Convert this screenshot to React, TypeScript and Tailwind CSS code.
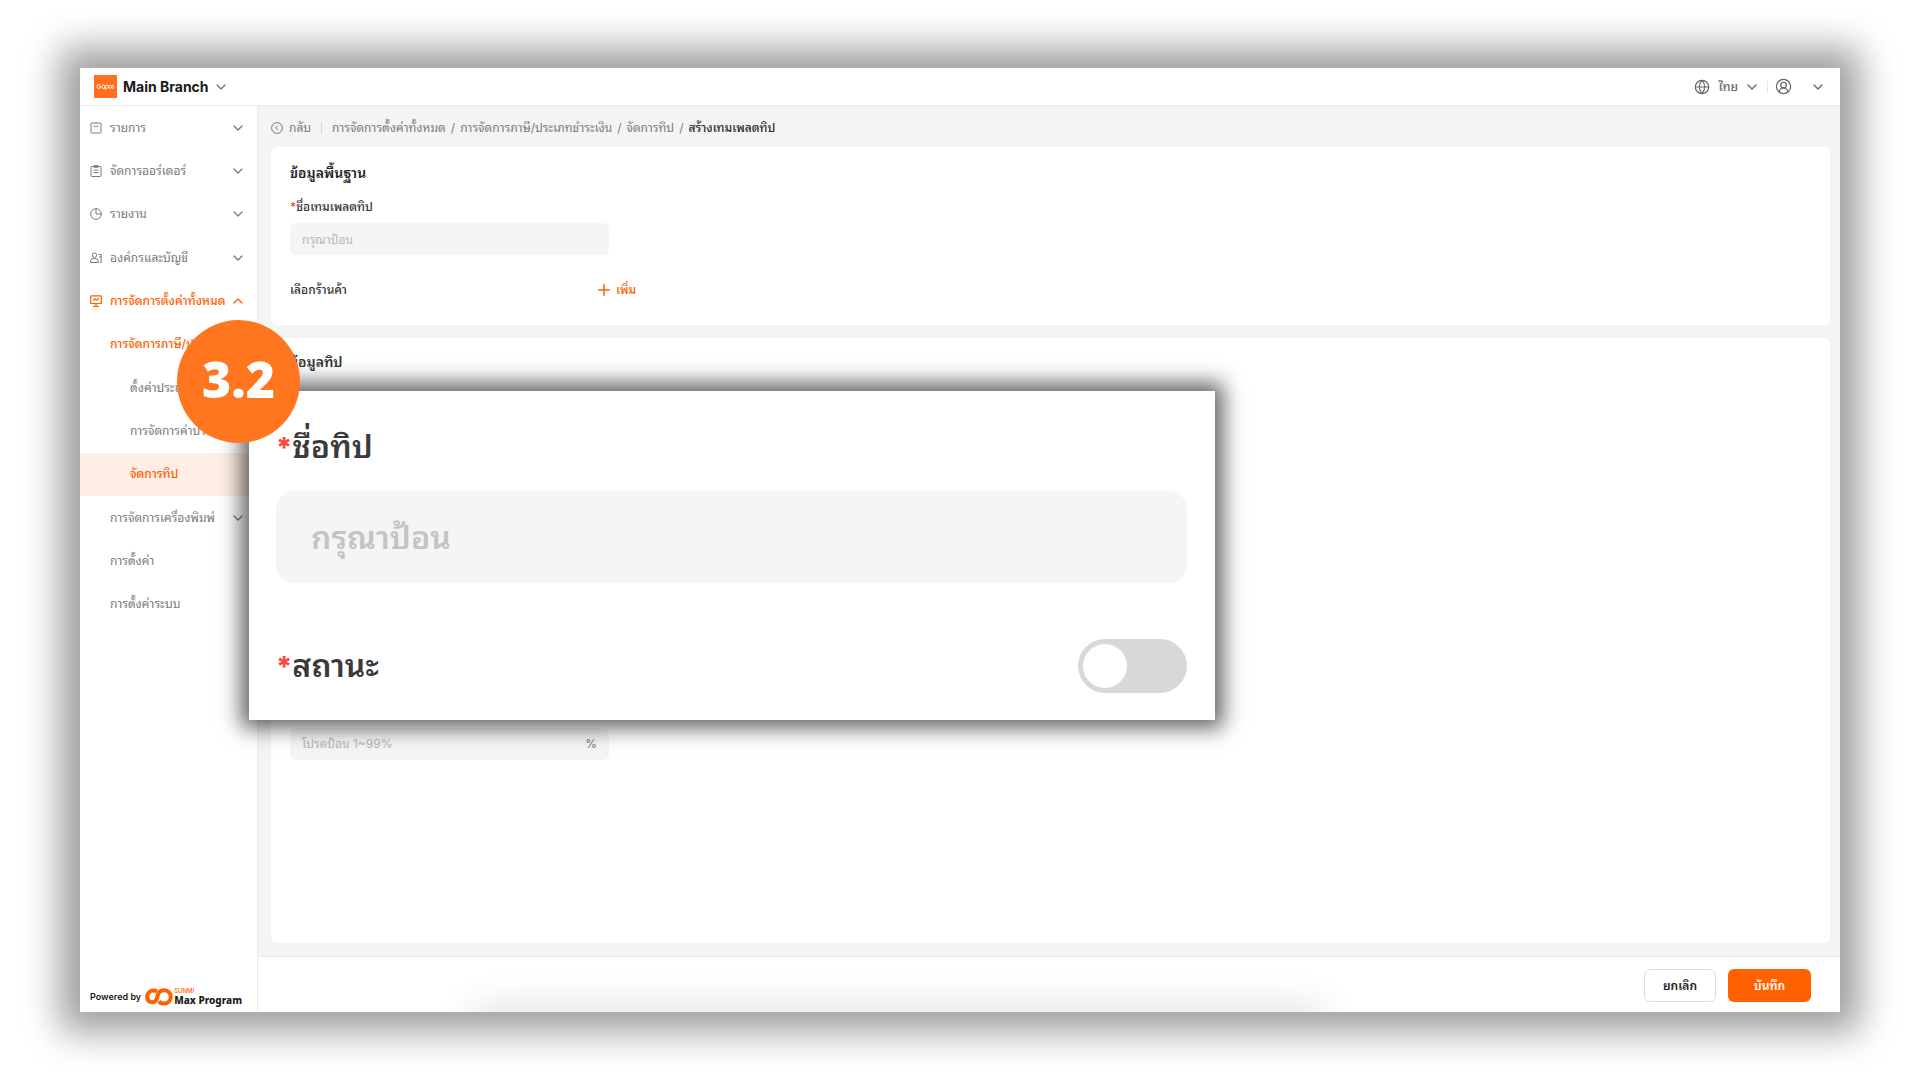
import React from 'react';
import { ChevronDown, ChevronUp, CircleUserRound, Globe, Plus } from 'lucide-react';

interface MenuItem {
  label: string;
  icon?: React.ReactNode;
  level?: 1 | 2;
  active?: boolean;
  selected?: boolean;
  arrow?: 'up' | 'down';
}

const iconProps = {
  width: 12,
  height: 12,
  viewBox: '0 0 12 12',
  fill: 'none',
  stroke: 'currentColor',
  strokeWidth: 1,
  'aria-hidden': true,
};

const BagIcon = () => (
  <svg {...iconProps}>
    <rect x="1" y="1" width="10" height="10" rx=".6" />
    <path d="M3.800 3.200c.4 2.200 4 2.200 4.400 0" />
  </svg>
);

const ClipboardIcon = () => (
  <svg {...iconProps}>
    <rect x="1" y="1.500" width="10" height="10" rx="1" />
    <path d="M4 .7h4v1.600H4zM3.500 5h5M3.500 7.500h5" />
  </svg>
);

const PieIcon = () => (
  <svg {...iconProps}>
    <circle cx="6" cy="6" r="5.300" />
    <path d="M6 .7V6h5.300" />
  </svg>
);

const OrgIcon = () => (
  <svg {...iconProps}>
    <circle cx="4.500" cy="3.200" r="2.200" />
    <path d="M.6 10.500V9c0-1.500 1-2.300 2.400-2.300h3c1.400 0 2.200.8 2.200 2.300v1.500zM8.500 2.500h2.700v8H9.500M9 5h2" />
  </svg>
);

const MonitorIcon = () => (
  <svg {...iconProps} strokeWidth={1.2}>
    <rect x=".7" y=".8" width="10.600" height="7.700" rx=".6" />
    <path d="M3 5.500l1.800-1.700 1.700 1.500L9 3M6 8.500V11M3 11.300h6" />
  </svg>
);

const MENU: MenuItem[] = [
  { label: 'รายการ', icon: <BagIcon />, arrow: 'down' },
  { label: 'จัดการออร์เดอร์', icon: <ClipboardIcon />, arrow: 'down' },
  { label: 'รายงาน', icon: <PieIcon />, arrow: 'down' },
  { label: 'องค์กรและบัญชี', icon: <OrgIcon />, arrow: 'down' },
  { label: 'การจัดการตั้งค่าทั้งหมด', icon: <MonitorIcon />, active: true, arrow: 'up' },
  { label: 'การจัดการภาษี/ประเภท', level: 1, active: true },
  { label: 'ตั้งค่าประเภท', level: 2 },
  { label: 'การจัดการค่าบริการ', level: 2 },
  { label: 'จัดการทิป', level: 2, active: true, selected: true },
  { label: 'การจัดการเครื่องพิมพ์', level: 1, arrow: 'down' },
  { label: 'การตั้งค่า', level: 1 },
  { label: 'การตั้งค่าระบบ', level: 1 },
];

const CRUMBS = ['การจัดการตั้งค่าทั้งหมด', 'การจัดการภาษี/ประเภทชำระเงิน', 'จัดการทิป'];

const SideItem: React.FC<{ item: MenuItem }> = ({ item }) => (
  <li className="flex">
    <button
      className={`flex flex-1 items-center pr-[11px] text-left whitespace-nowrap ${
        item.level === 2 ? 'pl-[50px]' : item.level === 1 ? 'pl-[30px]' : 'pl-[10px]'
      } ${item.active ? 'font-medium text-[#ff6000]' : 'text-[#7a7a7a]'} ${
        item.selected ? 'bg-[#ffeee5]' : ''
      }`}
    >
      {item.icon && <span className="mr-2 shrink-0">{item.icon}</span>}
      <span className="flex-1">{item.label}</span>
      {item.arrow === 'down' && <ChevronDown size={16} className="shrink-0" />}
      {item.arrow === 'up' && <ChevronUp size={16} className="shrink-0" />}
    </button>
  </li>
);

const Header: React.FC = () => (
  <header className="flex h-[38px] shrink-0 items-center border-b border-[#ececec] pr-[14px] pl-[14px] text-[#666]">
    <svg width="23" height="23" viewBox="0 0 23 23" aria-hidden="true">
      <rect width="23" height="23" fill="#ff6f1c" />
      <g fill="none" stroke="#fff" strokeWidth=".9">
        <path d="M6 9.800a2 2 0 1 0 .3 3.200v-1.500H5" />
        <circle cx="9.300" cy="11.800" r="1.700" />
        <circle cx="12.700" cy="11.800" r="1.700" />
        <path d="M11 11.800v3" />
        <circle cx="16" cy="11.800" r="1.500" />
        <path d="M20 10.300c-2-.6-2.400 1-1 1.400s1 2-1 1.500" />
      </g>
    </svg>
    <button className="ml-[6px] flex items-center gap-1 text-[14px] font-bold text-[#1a1a1a]">
      Main Branch
      <ChevronDown size={16} className="text-[#777]" />
    </button>
    <div className="ml-auto flex items-center">
      <button className="flex items-center">
        <Globe size={16} strokeWidth={1.75} />
        <span className="ml-2 font-medium">ไทย</span>
        <ChevronDown size={16} className="ml-[6px]" />
      </button>
      <span className="mx-[7px] h-3 w-px bg-[#e5e5e5]" />
      <button className="flex items-center" aria-label="Account">
        <CircleUserRound size={17} strokeWidth={1.75} />
        <ChevronDown size={16} className="ml-[18px]" />
      </button>
    </div>
  </header>
);

const Breadcrumb: React.FC = () => (
  <nav className="flex h-[41px] shrink-0 items-center pt-[3px] pl-[13px] text-[#7a7a7a]">
    <button className="flex items-center gap-[6px]">
      <svg {...iconProps}>
        <circle cx="6" cy="6" r="5.400" />
        <path d="M7 3.800L4.800 6 7 8.200" />
      </svg>
      กลับ
    </button>
    <span className="mr-[10px] ml-[10px] h-3 w-px bg-[#d5d5d5]" />
    {CRUMBS.map((crumb) => (
      <React.Fragment key={crumb}>
        <a href="#">{crumb}</a>
        <span className="mx-[5px]">/</span>
      </React.Fragment>
    ))}
    <span className="font-medium text-[#2b2b2b]">สร้างเทมเพลตทิป</span>
  </nav>
);

const Footer: React.FC = () => (
  <footer className="relative flex h-14 shrink-0 items-center justify-end gap-3 overflow-hidden border-t border-[#e8e8e8] bg-white pt-[2px] pr-[29px]">
    <div className="absolute -bottom-5 left-[215px] h-5 w-[850px] shadow-[0_0_40px_rgba(0,0,0,0.2)]" />
    <button className="h-[33px] w-[72px] rounded-md border border-[#dedede] bg-white font-semibold text-[#222]">
      ยกเลิก
    </button>
    <button className="h-[33px] w-[83px] rounded-md bg-[#ff6000] font-semibold text-white">
      บันทึก
    </button>
  </footer>
);

const PoweredBy: React.FC = () => (
  <div className="mt-auto flex items-center pb-[6px] pl-[10px] text-[9px] font-semibold text-[#1a1a1a]">
    <span>Powered by</span>
    <svg width="29" height="18" viewBox="0 0 29 18" className="ml-1" aria-hidden="true">
      <path
        d="M12 3.200C7 1 2.200 4 2.200 8.800c0 6.200 8 7.200 9.500 2.400C13 7 13 2.200 19 2.200c9 0 9 13.400 0 13.400-2.500 0-4-.8-5.200-2.200"
        fill="none"
        stroke="#ff6000"
        strokeWidth="4"
      />
    </svg>
    <div className="flex flex-col">
      <span className="text-[6px] leading-[6px] font-medium text-[#ff6000]">SUNMI</span>
      <span className="font-['Noto_Sans'] text-[10px] leading-[12px] font-extrabold">Max Program</span>
    </div>
  </div>
);

const TipPanel: React.FC = () => (
  <section className="absolute top-[391px] left-[249px] flex h-[329px] w-[966px] flex-col bg-white pr-7 pl-[27px] text-[32px] font-semibold text-[#3a3a3c] shadow-[0_0_20px_8px_rgba(0,0,0,0.62)]">
    <label htmlFor="tip-name" className="mt-8 leading-[48px]">
      <span className="text-[28px] font-extrabold text-[#ff453a]">*</span>
      ชื่อทิป
    </label>
    <input
      id="tip-name"
      placeholder="กรุณาป้อน"
      className="mt-[19px] h-[92px] w-full rounded-[18px] bg-[#f5f5f5] px-[35px] placeholder:text-[#c4c4c4]"
    />
    <div className="mt-14 flex items-center justify-between">
      <label htmlFor="tip-status">
        <span className="text-[28px] font-extrabold text-[#ff453a]">*</span>
        สถานะ
      </label>
      <input
        id="tip-status"
        type="checkbox"
        role="switch"
        className="h-[54px] w-[109px] appearance-none rounded-full bg-[#d8d8d8] p-[5px] before:block before:size-11 before:rounded-full before:bg-white checked:bg-[#ff6000]"
      />
    </div>
  </section>
);

export default function App() {
  return (
    <div className="relative flex h-screen min-h-[800px] bg-white px-20 py-[68px] font-[Inter,'Noto_Sans_Thai_Looped','Noto_Sans_Thai','Noto_Sans',sans-serif] text-[12px]">
      <div className="flex min-w-0 flex-1 flex-col bg-white shadow-[0_0_34px_20px_rgba(0,0,0,0.38)]">
        <Header />
        <div className="flex min-h-0 flex-1">
          <aside className="flex w-[178px] shrink-0 flex-col border-r border-[#ececec]">
            <ul className="grid h-[520px] auto-rows-fr">
              {MENU.map((item) => (
                <SideItem key={item.label} item={item} />
              ))}
            </ul>
            <PoweredBy />
          </aside>

          <main className="flex min-w-0 flex-1 flex-col bg-[#f4f4f4]">
            <Breadcrumb />
            <div className="mr-[10px] mb-[13px] ml-[13px] flex flex-1 flex-col gap-[13px] text-[#333]">
              <section className="h-[178px] shrink-0 rounded-md bg-white px-[19px] pt-[14px]">
                <h2 className="text-[14px] leading-6 font-semibold text-[#222]">ข้อมูลพื้นฐาน</h2>
                <label htmlFor="template-name" className="mt-3 block leading-5 font-medium">
                  <span className="text-[#ff453a]">*</span>
                  ชื่อเทมเพลตทิป
                </label>
                <input
                  id="template-name"
                  placeholder="กรุณาป้อน"
                  className="mt-[6px] h-8 w-[319px] rounded-md bg-[#f5f5f5] px-3 placeholder:text-[#b5b5b5]"
                />
                <div className="mt-[25px] flex h-5 items-center font-medium">
                  <span className="w-[305px]">เลือกร้านค้า</span>
                  <button className="flex items-center gap-[3px] text-[#ff6000]">
                    <Plus size={18} />
                    เพิ่ม
                  </button>
                </div>
              </section>

              <section className="flex-1 rounded-md bg-white px-[19px] pt-3">
                <h2 className="text-[14px] leading-6 font-semibold">ข้อมูลทิป</h2>
                <div className="mt-[354px] flex h-8 w-[319px] items-center rounded-md bg-[#f5f5f5] px-3">
                  <input
                    aria-label="เปอร์เซ็นต์ทิป"
                    placeholder="โปรดป้อน 1~99%"
                    className="min-w-0 flex-1 placeholder:text-[#b5b5b5]"
                  />
                  <span className="text-[#777]">%</span>
                </div>
              </section>
            </div>
            <Footer />
          </main>
        </div>
      </div>

      <TipPanel />
      <div className="absolute top-[320px] left-[177px] flex size-[123px] items-center justify-center rounded-full bg-[#ff761f] pb-1 font-['Open_Sans'] text-[50px] font-extrabold text-white">
        3.2
      </div>
    </div>
  );
}
